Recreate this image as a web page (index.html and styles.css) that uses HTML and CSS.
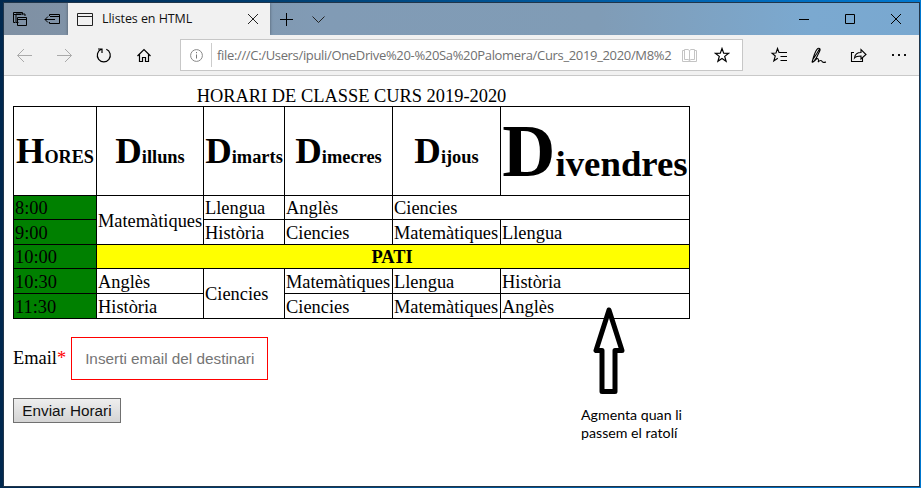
FILE: index.html
```html
<!DOCTYPE html>
<html lang="ca">
<head>
<meta charset="utf-8">
<title>Llistes en HTML</title>
<link rel="stylesheet" href="styles.css">
</head>
<body>
<div class="window">
  <header class="titlebar">
    <div class="tab-tools">
      <svg width="64" height="32" viewBox="4 3 64 32"><g fill="none" stroke="#000" stroke-width="1"><path d="M15.500 22.500h-2v-10h9v2M13 14.500h8M18.500 22.500h-2.500v-8.500h9v2"/><path d="M17.500 17.500h9v8h-9zM17.500 19.500h9"/><path d="M49.500 16v-1.500h10v9h-10v-1.500M50 16.500h9M45 19.500h10M48 16.500l-3 3 3 3"/></g></svg>
    </div>
    <div class="tab">
      <svg width="16" height="14" viewBox="0 0 16 14"><path d="M.5 1.500h15v12h-15zM.5 4.500h15" fill="none" stroke="#222"/></svg>
      <span class="tab-title">Llistes en HTML</span>
      <svg class="tab-close" width="10" height="10" viewBox="0 0 10 10"><path d="M0 0l10 10M10 0L0 10" stroke="#222" fill="none"/></svg>
    </div>
    <svg class="tab-new" width="50" height="32" viewBox="274 3 50 32"><g fill="none" stroke="#000"><path d="M280 19.500h13M286.500 13v13"/><path d="M312.500 16.500l6 6 6-6" stroke="#222"/></g></svg>
    <svg class="controls" width="119" height="32" viewBox="800 3 119 32"><g fill="none" stroke="#000"><path d="M799 19.500h10M845.500 14.500h9v9h-9zM891 14l10 10M901 14l-10 10"/></g></svg>
  </header>
  <nav class="toolbar">
    <svg class="nav-icons" width="176" height="40" viewBox="4 35 176 40"><g fill="none" stroke="#aaa"><path d="M17.500 55.500H32M24 49l-6.500 6.500L24 62M57 55.500h14.500M65 49l6.500 6.500L65 62"/></g><g fill="none" stroke="#000" stroke-width="1.200"><path d="M101.300 49.300a6.500 6.500 0 1 0 5 0M98 49h4v4"/><path d="M137.500 56l6.500-6.500 6.500 6.500M139.500 54.500v7h3v-4h3v4h3v-7"/></g></svg>
    <div class="address">
      <svg class="info" width="13" height="13" viewBox="0 0 13 13"><circle cx="6.500" cy="6.500" r="5.900" fill="none" stroke="#888"/><path d="M6.500 5.500v4M6.500 3v1.200" stroke="#777"/></svg>
      <span class="url">file:///C:/Users/ipuli/OneDrive%20-%20Sa%20Palomera/Curs_2019_2020/M8%2</span>
      <svg class="book" width="15" height="15" viewBox="0 0 15 15"><path d="M2.500 2.500H.5v11h14v-11h-2M7.500 2.500v10M2.500 1.500h3.500l1.500 1 1.500-1h3.500v10H9l-1.500 1-1.500-1H2.500z" fill="none" stroke="#c4c4c4"/></svg>
      <svg class="star" width="16" height="16" viewBox="0 0 16 16"><path d="M8 1.500l1.700 4.700 5 .1-4 3.100 1.400 4.900L8 11.500l-4.100 2.800 1.400-4.900-4-3.100 5-.1z" fill="none" stroke="#000" stroke-width="1.200"/></svg>
    </div>
    <svg class="actions" width="177" height="40" viewBox="742 35 177 40"><g fill="none" stroke="#000" stroke-width="1.100"><path d="M781 52.500h-2l-1.500-4-1.500 4.500-4 .3 3.300 2.700-1.500 5 4-2.700M779 52.500h8M780.500 56.500h6.500M780.500 60.500h6.500"/><path d="M812 62.500c1-4 2.700-10.500 5-13.200 1.500-1.800 4.200-1.200 2.500 2.200-1.500 3.500-4 8-6 10.500M812.500 60l4-6 3-5M812 62.500l3-2c3-4 4.500-.5 3 1.500 3-2.500 3.500-1.500 4.500 0 .7.800 1.500.5 3.500 0"/><path d="M854 52.500h-2.500v9h11V58M854.500 58c.5-4 3-5.500 6.500-5.500v-3l5 5-5 4.500v-3c-3 0-5 .3-6.500 2z"/></g><path d="M892 54h2v2h-2zM898 54h2v2h-2zM904 54h2v2h-2z" fill="#111"/></svg>
  </nav>
  <main class="page">
    <table class="schedule">
      <caption>HORARI DE CLASSE CURS 2019-2020</caption>
      <colgroup><col class="c1"><col class="c2"><col class="c3"><col class="c4"><col class="c5"><col class="c6"></colgroup>
      <tr class="head"><th class="hours">Hores</th><th>Dilluns</th><th>Dimarts</th><th>Dimecres</th><th>Dijous</th><th class="grown">Divendres</th></tr>
      <tr class="short"><td class="hour">8:00</td><td rowspan="2">Matemàtiques</td><td>Llengua</td><td>Anglès</td><td colspan="2">Ciencies</td></tr>
      <tr><td class="hour">9:00</td><td>Història</td><td>Ciencies</td><td>Matemàtiques</td><td>Llengua</td></tr>
      <tr class="short"><td class="hour">10:00</td><td class="break" colspan="5">PATI</td></tr>
      <tr><td class="hour">10:30</td><td>Anglès</td><td rowspan="2">Ciencies</td><td>Matemàtiques</td><td>Llengua</td><td>Història</td></tr>
      <tr><td class="hour">11:30</td><td>Història</td><td>Ciencies</td><td>Matemàtiques</td><td>Anglès</td></tr>
    </table>
    <form class="mail">
      <div class="field"><label for="email">Email<span class="required">*</span></label><input id="email" type="text" placeholder="Inserti email del destinari"></div>
      <button type="button">Enviar Horari</button>
    </form>
  </main>
</div>
<div class="note">
  <svg width="34" height="88" viewBox="0 0 34 88"><path d="M17 3L4 43.500h6v41h13v-41h7z" fill="#fff" stroke="#000" stroke-width="5" stroke-linejoin="round"/></svg>
  <p>Agmenta quan li<br>passem el ratolí</p>
</div>
</body>
</html>
```
FILE: styles.css
```css
* { box-sizing: border-box; }
body {
  margin: 0;
  width: 921px;
  height: 488px;
  padding: 2px 1px 1px 3px;
  overflow: hidden;
  position: relative;
  background: linear-gradient(90deg, #00284f 0, #004378 35%, #0065b3 75%, #0078d0 100%);
}
svg { display: block; flex: none; }
.window {
  height: 485px;
  border: 1px solid #20354a;
  background: #fff;
}
.titlebar {
  display: flex;
  height: 32px;
  background: linear-gradient(90deg, #7f90a3 0, #819bb5 35%, #809cb6 65%, #7ba9d0 88%, #79a8d0 100%);
}
.tab-tools { width: 64px; }
.tab {
  width: 202px;
  display: flex;
  align-items: center;
  padding: 0 12px 0 9px;
  background: #f1f1f1;
  box-shadow: 0 0 3px rgba(0, 0, 0, .4);
  clip-path: inset(0 -4px);
}
.tab-title {
  margin-left: 9px;
  font: 12.5px/18px "Open Sans", sans-serif;
  letter-spacing: -.07px;
  color: #111;
}
.tab-close { margin-left: auto; }
.tab-new { margin-left: 4px; overflow: visible; }
.controls { margin-left: auto; overflow: visible; }
.toolbar {
  display: flex;
  align-items: center;
  height: 41px;
  background: #f1f1f1;
  border-bottom: 1px solid #c9c9c9;
}
.address {
  width: 563px;
  height: 32px;
  display: flex;
  align-items: center;
  padding: 0 12px 0 9px;
  background: #fff;
  border: 1px solid #c7c7c7;
}
.url {
  width: 465px;
  height: 24px;
  margin-left: 8px;
  padding-left: 5px;
  border-left: 1px solid #ccc;
  font: 13px/24px "Open Sans", sans-serif;
  letter-spacing: -.335px;
  white-space: nowrap;
  color: #707070;
}
.book { margin-left: 6px; }
.star { margin-left: auto; }
.actions { margin-left: -1px; }
.page {
  padding: 9px;
  font: 18.4px/21px "Liberation Serif", serif;
  color: #000;
}
.schedule {
  width: 677px;
  table-layout: fixed;
  border-collapse: collapse;
  white-space: nowrap;
}
.schedule caption { line-height: 20px; padding-top: 1px; }
.c1 { width: 83px; }
.c2 { width: 107px; }
.c3 { width: 81px; }
.c4, .c5 { width: 108px; }
.c6 { width: 189px; }
.schedule th, .schedule td {
  padding: 2px 1px 0;
  border: 1px solid #000;
}
.schedule tr { height: 25px; }
.schedule .short { height: 24px; }
.schedule .head { height: 89px; }
.schedule th { padding-top: 5px; line-height: 42px; }
.schedule th::first-letter { font-size: 2em; }
.schedule .hours { font-size: 18.2px; text-transform: uppercase; }
.schedule .grown {
  padding-top: 12px;
  font-size: 36.8px;
  line-height: 60px;
}
.schedule .hour { background: #008000; }
.schedule .break {
  padding-right: 3px;
  background: #ff0;
  font-weight: bold;
  text-align: center;
}
.mail { margin-top: 18px; }
.field {
  display: flex;
  align-items: center;
  gap: 5px;
}
.required { color: #f00; }
.field input {
  width: 197px;
  height: 43px;
  padding: 0 13px;
  border: 1px solid #f00;
  font: 15.3px "Liberation Sans", sans-serif;
}
.field input::placeholder { color: #757575; }
.mail button {
  display: block;
  width: 108px;
  height: 25px;
  margin-top: 18px;
  padding: 0;
  border: 1px solid #707070;
  border-radius: 0;
  background: linear-gradient(#eee, #d4d4d4);
  font: 15.3px "Liberation Sans", sans-serif;
  color: #111;
}
.note {
  position: absolute;
  left: 581px;
  top: 307px;
}
.note svg { margin-left: 11px; }
.note p {
  margin: 11px 0 0;
  font: 14.2px/18px Lato, sans-serif;
  white-space: nowrap;
}
```
